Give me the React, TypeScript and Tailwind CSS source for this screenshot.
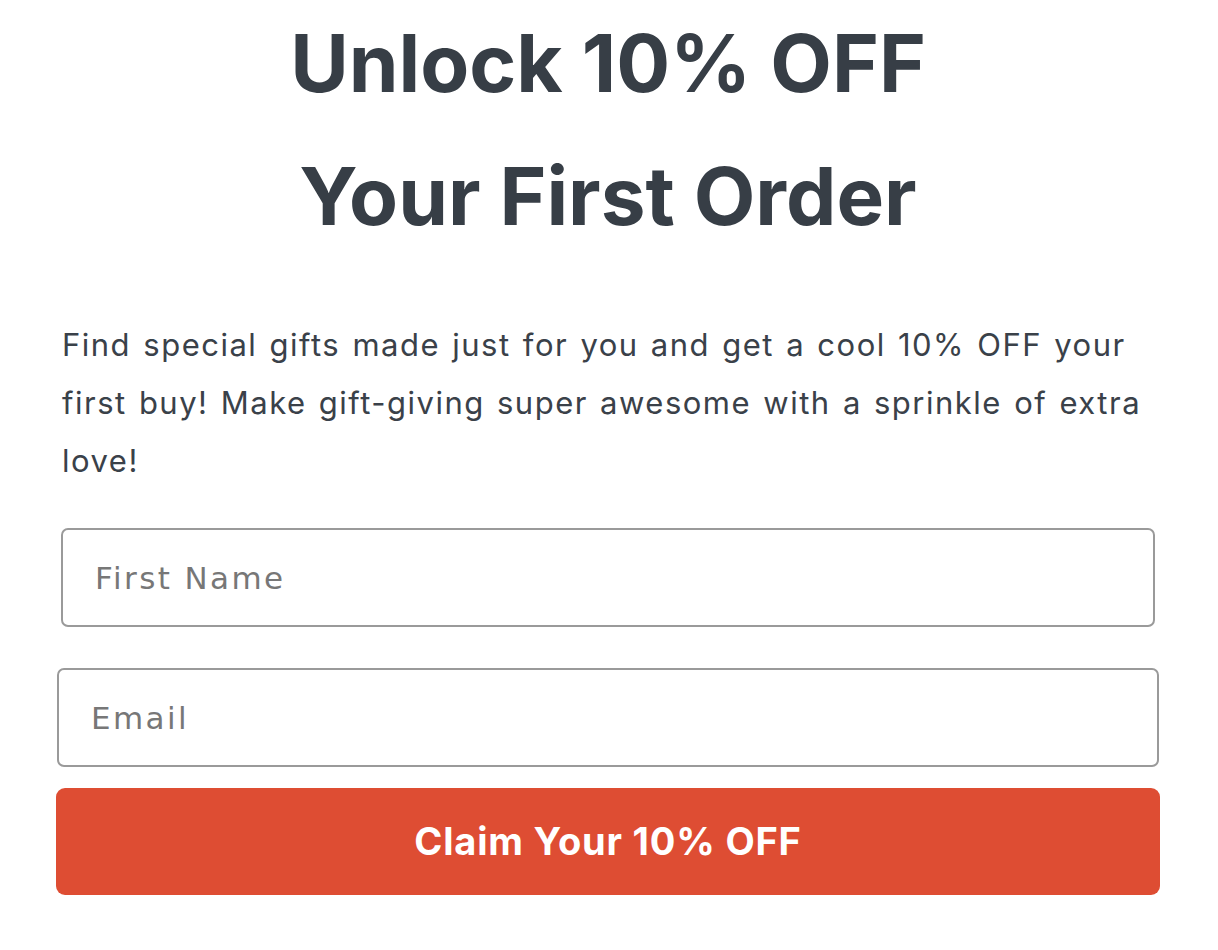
import React from "react";

const App: React.FC = () => {
  return (
    <div className="min-h-screen bg-white font-['Inter',sans-serif]">
      <div className="w-[1104px] ml-[56px] flex flex-col">
        <h1 className="text-center text-[#373e46] font-bold text-[80px] leading-[133px] tracking-[0px] -mt-[4px]">
          Unlock 10% OFF
          <br />
          Your First Order
        </h1>

        <p className="mt-[54px] px-[6px] text-[#3a4149] text-[31px] leading-[58px] tracking-[1.5px] [word-spacing:2px]">
          Find special gifts made just for you and get a cool 10% OFF your
          first buy! Make gift-giving super awesome with a sprinkle of extra
          love!
        </p>

        <form
          className="mt-[38px] flex flex-col"
          onSubmit={(e) => e.preventDefault()}
        >
          <input
            type="text"
            placeholder="First Name"
            className="mx-[5px] h-[99px] rounded-[7px] border-2 border-[#9a9a9a] bg-white px-[32px] text-[31px] tracking-[2.4px] font-['DejaVu_Sans',sans-serif] text-[#333] placeholder:text-[#777] outline-none"
          />
          <input
            type="email"
            placeholder="Email"
            className="mx-[1px] mt-[41px] h-[99px] rounded-[7px] border-2 border-[#9a9a9a] bg-white px-[32px] text-[31px] tracking-[2.4px] font-['DejaVu_Sans',sans-serif] text-[#333] placeholder:text-[#777] outline-none"
          />
          <button
            type="submit"
            className="mt-[21px] h-[107px] rounded-[9px] bg-[#de4d33] text-white text-[38px] font-bold tracking-[0.8px]"
          >
            Claim Your 10% OFF
          </button>
        </form>
      </div>
    </div>
  );
};

export default App;
